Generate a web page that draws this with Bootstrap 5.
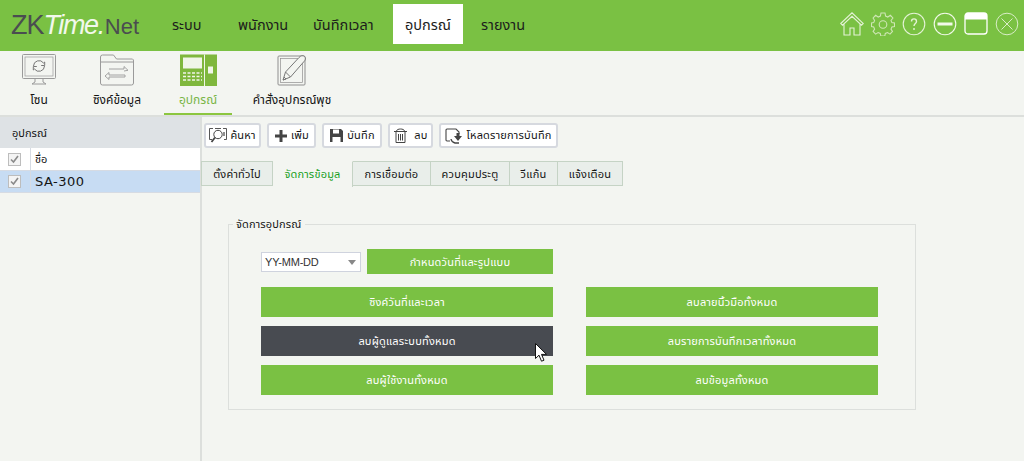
<!DOCTYPE html>
<html lang="th">
<head>
<meta charset="utf-8">
<title>ZKTime.Net</title>
<link href="https://cdn.jsdelivr.net/npm/bootstrap@5.3.0/dist/css/bootstrap.min.css" rel="stylesheet">
<style>
html,body{height:461px;overflow:hidden}
body{background:#f3f5f1;font-family:"Noto Sans","Liberation Sans","Noto Sans Thai",sans-serif;font-size:11px;color:#141414;position:relative}
.zk-head{height:51px;background:#7ac143}
.zk-logo{width:172px;padding-left:11px;font-family:"Liberation Sans",sans-serif;font-size:27px;line-height:51px;letter-spacing:-1px;color:#4a4d50;white-space:nowrap}
.zk-logo i{color:#f2f8ec;font-style:italic;font-weight:400;letter-spacing:-1.400px}
.zk-logo b{font-weight:400;font-size:22px;letter-spacing:0;padding-left:1px}
.zk-menu{height:40px;margin-top:4px;font-size:14.500px;line-height:40px;color:#1c1c1c;white-space:nowrap}
.zk-menu span{display:block}
.m1{width:66px}.m2{width:75px}.m3{width:80px}.m4{width:70px;background:#fff;text-align:center}.m5{margin-left:18px}
.zk-win{padding:12px 5px 0 0;gap:7px}
.zk-sub{height:66px;border-bottom:2px solid #dcdfdc}
.zk-sub-item{position:relative;text-align:center;height:64px;font-size:12px;color:#141414;white-space:nowrap}
.zk-sub-item svg{display:block;margin:3px auto 0}
.zk-sub-item div{margin-top:6px;line-height:16px}
.s1{width:78px}.s2{width:78px}.s3{width:68px;margin-left:8px;color:#7ab648}.s4{width:120px}
.s3::after{content:"";position:absolute;left:0;right:0;bottom:0;height:2px;background:#8cc63f}
.zk-main{height:344px}
.zk-left{width:202px;border-right:2px solid #dcdfdc;height:100%}
.zk-lhead{height:31px;background:#dee2e5;line-height:31px;padding-left:12px}
.zk-row{height:23px;display:flex;align-items:center;border-bottom:1px solid #d6dbe3;background:#fff}
.zk-row.sel{background:#c7dcf3;font-family:"DejaVu Sans",sans-serif;font-size:13px;letter-spacing:.5px;height:22px}
.zk-chk{width:31px;height:100%;border-right:1px solid #d6dbe3;display:flex;align-items:center;justify-content:center}
.zk-chk span{display:flex;width:13px;height:13px;border:1px solid #bdbdbd;background:#f4f4f4;align-items:center;justify-content:center;margin-left:-1px}
.zk-row em{font-style:normal;padding-left:4px}
.zk-right{flex:1;min-width:0}
.zk-tools{padding:6px 0 0 2px;gap:6px}
.zk-tool{height:25px;display:flex;align-items:center;justify-content:center;gap:3px;background:#fff;border:2px solid #d6d9df;border-radius:3px;font-size:11px;letter-spacing:.2px;color:#141414;white-space:nowrap}
.t1{width:57px}.t2{width:49px}.t3{width:60px}.t4{width:45px}.t5{width:119px}
.zk-tabs{margin-top:13px;height:26px;margin-left:-1px}
.zk-tab{height:25px;line-height:24px;background:#e9eeea;border:1px solid #c5d3c5;border-left:0;text-align:center;white-space:nowrap;letter-spacing:.2px}
.zk-tab:first-child{border-left:1px solid #c5d3c5}
.zk-tab.on{background:#f3f5f1;color:#16a01e;border-top:1px solid #f3f5f1;border-bottom:0;height:26px}
.w1{width:72px}.w2{width:80px}.w3{width:78px}.w4{width:79px}.w5{width:48px}.w6{width:65px}
.zk-field{margin:37px 0 0 26px;width:688px;height:186px;border:1px solid #dcdfdc;position:relative;padding:24px 0 0 32px}
.zk-legend{position:absolute;left:4px;top:-8px;background:#f3f5f1;padding:0 3px;line-height:14px;font-size:11px;letter-spacing:.15px}
.zk-grid{width:617px;gap:33px}
.zk-col{width:292px}
.zk-select{width:100px;height:20px;margin-top:3px;background:#fff;border:1px solid #cfd3de;font-family:"Liberation Sans",sans-serif;font-size:11px;line-height:18px;padding-left:3px;position:relative;color:#333;letter-spacing:-.2px}
.zk-select::after{content:"";position:absolute;right:4px;top:7px;border:4px solid transparent;border-top:5px solid #888}
.zk-btn{display:block;width:100%;height:30px;line-height:30px;border:0;padding:0;border-radius:0;background:#7ac143;color:#fff;text-align:center;font-size:11px;letter-spacing:.2px}
.zk-btn.dark{background:#484b51}
.zk-btn.short{height:25px;line-height:25px;width:186px;margin-left:6px}
.zk-gap{margin-top:9px}
.zk-first{margin-top:13px}
.zk-cursor{position:absolute;left:535px;top:343px}
</style>
</head>
<body>
<header class="zk-head d-flex">
  <div class="zk-logo">ZK<i>Time.</i><b>Net</b></div>
  <nav class="zk-menu d-flex">
    <span class="m1">ระบบ</span><span class="m2">พนักงาน</span><span class="m3">บันทึกเวลา</span><span class="m4">อุปกรณ์</span><span class="m5">รายงาน</span>
  </nav>
  <div class="zk-win d-flex ms-auto">
    <svg width="24" height="24" viewBox="0 0 24 24" fill="none" stroke="#e4f2d6" stroke-width="1.100"><path d="M.7 11.500 12 .8l11.300 10.700-1.800 1.700L12 4.300 2.500 13.200zM4 12v11h6v-7h4v7h6V12"/></svg>
    <svg width="24" height="24" viewBox="0 0 24 24" fill="none" stroke="#cfe6b6" stroke-width="1.100"><path d="M10 1h4l.6 3 2.200 1 2.600-1.700 2.500 2.700L20 8.500l.9 2.100 2.600.4v3.500l-2.600.5-.9 2.100 1.500 2.400-2.500 2.600-2.500-1.600-2.200.9-.5 2.600h-4l-.5-2.600-2.200-.9-2.500 1.600L2.100 19.500l1.500-2.400-.9-2.100-2.200-.5V11l2.200-.4.900-2.100L2.100 6l2.500-2.700L7.200 5l2.200-1z"/><circle cx="12" cy="12.500" r="3.800"/></svg>
    <svg width="24" height="24" viewBox="0 0 24 24" fill="none" stroke="#e4f2d6" stroke-width="1.100"><circle cx="12" cy="12" r="10.800"/><path d="M9.500 9.500c0-3.500 5-3.500 5 0 0 2-2.500 2.200-2.500 4.500M12 16v2" stroke-width="1.400"/></svg>
    <svg width="24" height="24" viewBox="0 0 24 24" fill="none" stroke="#f2f9ea" stroke-width="1.100"><circle cx="12" cy="12" r="10.800"/><path d="M4.500 12h15" stroke-width="3"/></svg>
    <svg width="24" height="24" viewBox="0 0 24 24"><rect x="1" y="1" width="22" height="21" rx="3" fill="none" stroke="#fff" stroke-width="1.300"/><path d="M1 4a3 3 0 0 1 3-3h16a3 3 0 0 1 3 3v3.500H1z" fill="#fff"/></svg>
    <svg width="24" height="24" viewBox="0 0 24 24" fill="none" stroke="#d9edc7" stroke-width="1"><circle cx="12" cy="12" r="10.800"/><path d="m6.500 6.500 11 11m0-11-11 11"/></svg>
  </div>
</header>

<section class="zk-sub d-flex">
  <div class="zk-sub-item s1">
    <svg width="36" height="32" viewBox="0 0 36 32" fill="none" stroke="#9a9a9a"><rect x="1.500" y=".5" width="33" height="24" rx="1"/><rect x="4" y="3" width="28" height="19" stroke-width=".7"/><path d="M14 25v3l-3 2h14l-3-2v-3" /><path d="M12.500 12a5.500 5.500 0 0 1 10-3l1.200-1v3.500h-3.500M23.500 12a5.500 5.500 0 0 1-10 3l-1.200 1v-3.500h3.500" stroke="#777"/></svg>
    <div>โซน</div>
  </div>
  <div class="zk-sub-item s2">
    <svg width="36" height="32" viewBox="0 0 36 32" fill="none" stroke="#9a9a9a"><path d="M1.500 3a2 2 0 0 1 2-2h11l3 4h16a2 2 0 0 1 1 2v22a2 2 0 0 1-2 2h-29a2 2 0 0 1-2-2z"/><path d="M1.500 8h33"/><path d="M10 15h15v-2.500l4 3.800-4 .7M26 21H10v-2.500L6 22l4 3.500V23h16z" stroke-width=".9"/></svg>
    <div>ซิงค์ข้อมูล</div>
  </div>
  <div class="zk-sub-item s3">
    <svg width="37" height="32" viewBox="0 0 37 32"><rect width="37" height="32" y=".5" fill="#7fb73d"/><rect x="3" y="3.500" width="19" height="11" fill="#f0f5e8"/><path d="M3 19h19M3 22.500h19M3 26h19" stroke="#f0f5e8" stroke-width="1.600" stroke-dasharray="3 1.500"/><rect x="24" y=".5" width="1" height="32" fill="#f0f5e8"/><rect x="28" y="12.500" width="5" height="7" fill="#f0f5e8"/></svg>
    <div>อุปกรณ์</div>
  </div>
  <div class="zk-sub-item s4">
    <svg width="31" height="32" viewBox="0 0 31 32" fill="none" stroke="#8f8f8f"><rect x="1" y="2" width="27" height="29" rx="1"/><rect x="3.500" y="4.500" width="22" height="24" stroke-width=".7"/><path d="M6 26l2.500-8L22 3.500c1.500-1.800 4-2.500 5.500-1s1 3.500-.5 5L13.500 23z" fill="#f3f5f1" stroke="#777"/><path d="M8.500 18l5 5M6 26l3-1-2-2" stroke="#777"/></svg>
    <div>คำสั่งอุปกรณ์พุช</div>
  </div>
</section>

<main class="zk-main d-flex">
  <aside class="zk-left">
    <div class="zk-lhead">อุปกรณ์</div>
    <div class="zk-row"><div class="zk-chk"><span><svg width="9" height="9" viewBox="0 0 9 9" fill="none" stroke="#8a8a8a" stroke-width="1.600"><path d="m1 4.500 2.500 2.500 4.500-6"/></svg></span></div><em>ชื่อ</em></div>
    <div class="zk-row sel"><div class="zk-chk"><span><svg width="9" height="9" viewBox="0 0 9 9" fill="none" stroke="#8a8a8a" stroke-width="1.600"><path d="m1 4.500 2.500 2.500 4.500-6"/></svg></span></div><em>SA-300</em></div>
  </aside>
  <div class="zk-right">
    <div class="zk-tools d-flex">
      <div class="zk-tool t1"><svg width="18" height="15" viewBox="0 0 18 15" fill="none" stroke="#444"><path d="M4 .5H.5v11H3M14 .5h3.500v11H15M6 .5h6" stroke-width=".9"/><circle cx="9" cy="6.500" r="4.200"/><path d="m6 9.500-3.500 4.500" stroke-width="1.800"/><path d="M15 4v4" stroke-width="1.200"/></svg>ค้นหา</div>
      <div class="zk-tool t2"><svg width="14" height="14" viewBox="0 0 14 14"><path d="M5.500 1h3v4.500H13v3H8.500V13h-3V8.500H1v-3h4.500z" fill="#444"/></svg>เพิ่ม</div>
      <div class="zk-tool t3"><svg width="15" height="15" viewBox="0 0 15 15"><path d="M1 1h11l2 2v11H1z" fill="#444"/><rect x="4" y="1.500" width="6" height="4" fill="#fff"/><rect x="3.500" y="9" width="8" height="5" fill="#fff"/></svg>บันทึก</div>
      <div class="zk-tool t4"><svg width="15" height="15" viewBox="0 0 15 15" fill="none" stroke="#444"><path d="M1 3.500h13M3 3.500C4 1.500 5.500 1 7.500 1s3.500.5 4.500 2.500M3 4v10.500h9V4M5.500 6v6.500M7.500 6v6.500M9.500 6v6.500"/></svg>&nbsp;ลบ</div>
      <div class="zk-tool t5"><svg width="18" height="16" viewBox="0 0 18 16" fill="none" stroke="#444"><path d="M5 13H2a1 1 0 0 1-1-1V2a1 1 0 0 1 1-1h9l3 3v2" stroke-width="1.100"/><path d="M9 8h2.500V5h3v3H17l-4 5z" fill="#444" stroke="none"/><path d="M6 11a5 5 0 0 0 4 4h4" stroke-width="1.300"/></svg>โหลดรายการบันทึก</div>
    </div>
    <div class="zk-tabs d-flex">
      <div class="zk-tab w1">ตั้งค่าทั่วไป</div>
      <div class="zk-tab on w2">จัดการข้อมูล</div>
      <div class="zk-tab w3">การเชื่อมต่อ</div>
      <div class="zk-tab w4">ควบคุมประตู</div>
      <div class="zk-tab w5">วีแก้น</div>
      <div class="zk-tab w6">แจ้งเตือน</div>
    </div>
    <fieldset class="zk-field">
      <div class="zk-legend">จัดการอุปกรณ์</div>
      <div class="d-flex">
        <div class="zk-select">YY-MM-DD</div>
        <button type="button" class="zk-btn short">กำหนดวันที่และรูปแบบ</button>
      </div>
      <div class="zk-grid d-flex zk-first">
        <div class="zk-col">
          <button type="button" class="zk-btn">ซิงค์วันที่และเวลา</button>
          <button type="button" class="zk-btn dark zk-gap">ลบผู้ดูแลระบบทั้งหมด</button>
          <button type="button" class="zk-btn zk-gap">ลบผู้ใช้งานทั้งหมด</button>
        </div>
        <div class="zk-col">
          <button type="button" class="zk-btn">ลบลายนิ้วมือทั้งหมด</button>
          <button type="button" class="zk-btn zk-gap">ลบรายการบันทึกเวลาทั้งหมด</button>
          <button type="button" class="zk-btn zk-gap">ลบข้อมูลทั้งหมด</button>
        </div>
      </div>
    </fieldset>
  </div>
</main>
<svg class="zk-cursor" width="13" height="19" viewBox="0 0 13 19"><path d="M.5.500v15l3.500-3.300 2.500 6 2.500-1-2.500-5.800h5z" fill="#fff" stroke="#111"/></svg>
</body>
</html>
